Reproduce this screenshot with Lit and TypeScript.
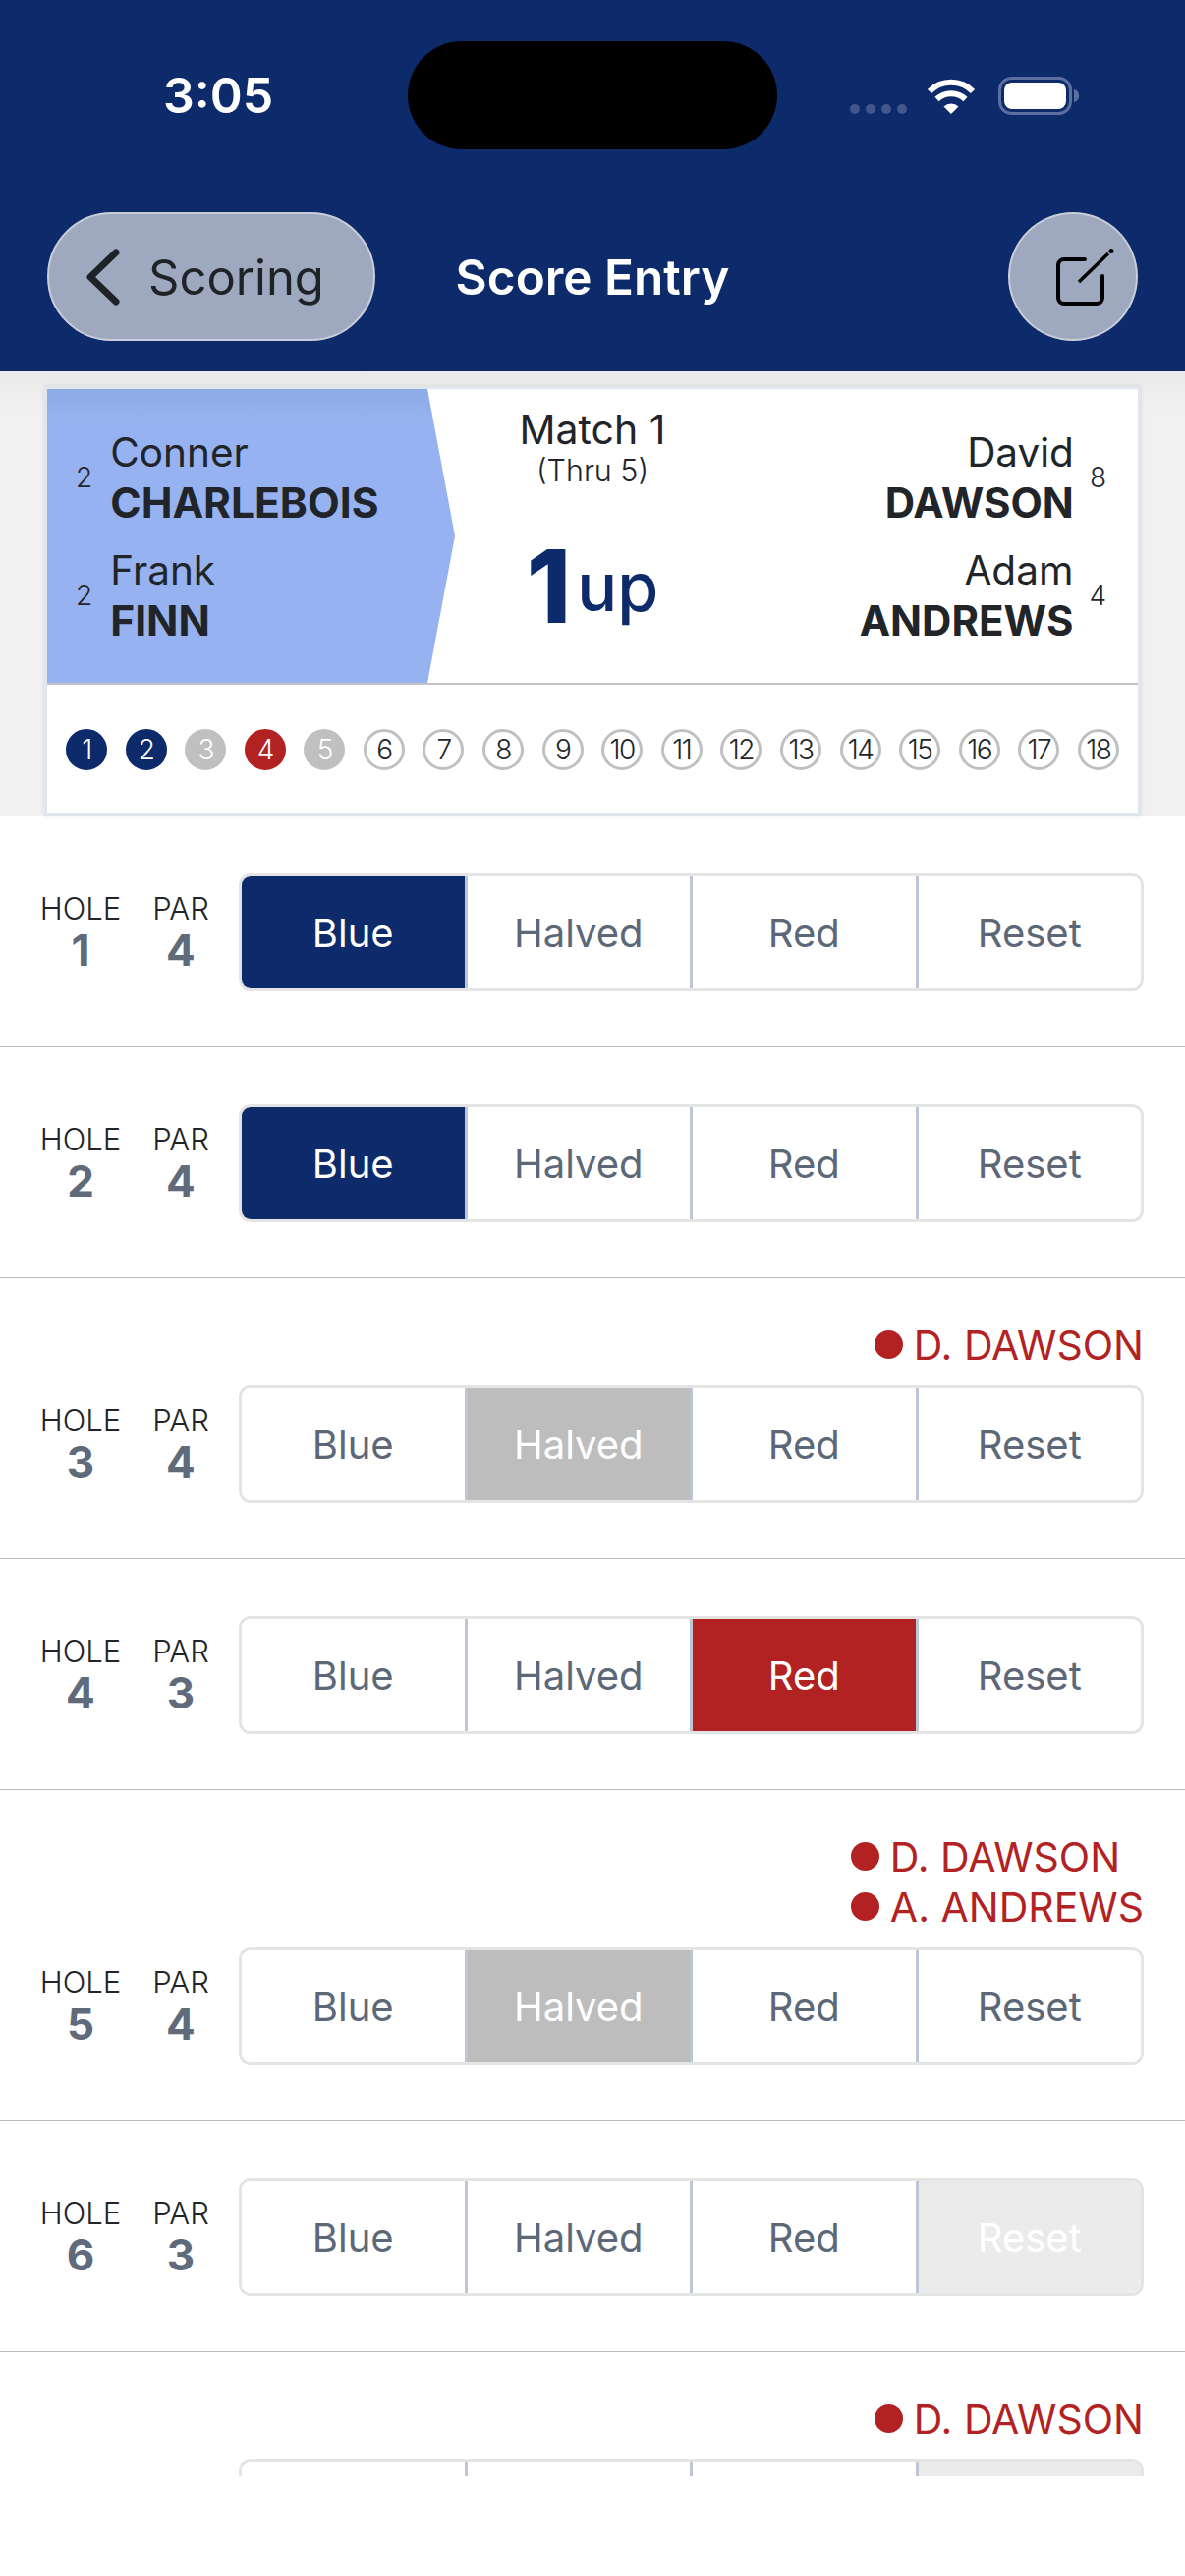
import { LitElement, css, html, nothing } from 'lit';
import { customElement } from 'lit/decorators.js';
import { classMap } from 'lit/directives/class-map.js';

interface Hole {
  hole: number;
  par: number;
  picked?: string;
  resetOff?: boolean;
  tags?: string[];
  // last row sits under the fold, only its top edge shows
  partial?: boolean;
}

const HOLES: Hole[] = [
  { hole: 1, par: 4, picked: 'Blue' },
  { hole: 2, par: 4, picked: 'Blue' },
  { hole: 3, par: 4, picked: 'Halved', tags: ['D. DAWSON'] },
  { hole: 4, par: 3, picked: 'Red' },
  { hole: 5, par: 4, picked: 'Halved', tags: ['D. DAWSON', 'A. ANDREWS'] },
  { hole: 6, par: 3, resetOff: true },
  { hole: 7, par: 4, resetOff: true, partial: true, tags: ['D. DAWSON'] },
];

const DOTS = ['blue', 'blue', 'grey', 'red', 'grey'];
const OPTIONS = ['Blue', 'Halved', 'Red', 'Reset'];

@customElement('app-root')
export class AppRoot extends LitElement {
  static styles = css`
    :host {
      display: block;
      height: 2622px;
      overflow: hidden;
      background: #fff;
      font-family: Inter, 'Liberation Sans', sans-serif;
      color: #212529;
    }

    .top {
      height: 378px;
      background: #0d2a6b;
      box-sizing: border-box;
      padding-top: 42px;
    }

    .status {
      display: grid;
      grid-template-columns: 415px 376px 1fr;
      height: 110px;
    }
    .time {
      padding-left: 166px;
      font-size: 50px;
      font-weight: 600;
      line-height: 110px;
      color: #fff;
    }
    .island {
      background: #000;
      border-radius: 55px;
    }
    .sys {
      position: relative;
      display: flex;
      padding-left: 74px;
    }
    .signal {
      display: flex;
      gap: 6px;
      margin-top: 64px;
    }
    .signal i {
      width: 10px;
      height: 10px;
      border-radius: 50%;
      background: #3f578d;
    }
    .wifi {
      margin: 37px 0 0 19px;
    }
    .battery {
      margin: 36px 0 0 22px;
    }

    .nav {
      display: grid;
      grid-template-columns: 1fr auto 1fr;
      align-items: center;
      padding: 64px 48px 0;
    }
    .back {
      justify-self: start;
      display: flex;
      align-items: center;
      box-sizing: border-box;
      width: 334px;
      height: 131px;
      padding-left: 35px;
      gap: 26px;
      border: 2px solid #c9ced9;
      border-radius: 66px;
      background: #9ea9c0;
      font-size: 49px;
      line-height: 1;
      color: #1f2226;
    }
    .back span {
      padding-top: 2px;
    }
    .title {
      font-size: 49.5px;
      font-weight: 600;
      color: #fff;
    }
    .edit {
      justify-self: end;
      display: flex;
      box-sizing: border-box;
      width: 132px;
      height: 131px;
      border: 2px solid #c9ced9;
      border-radius: 50%;
      background: #9ea9c0;
    }
    .edit svg {
      margin: 35px 0 0 45px;
    }

    .band {
      height: 453px;
      box-sizing: border-box;
      padding: 15px 45px 0;
      background: linear-gradient(#e9e9e9, #f1f1f1 40px);
    }
    .card {
      height: 438px;
      box-sizing: border-box;
      border: 3px solid #e0e6eb;
      background: #fff;
      box-shadow: 0 0 4px rgba(0, 0, 0, 0.1);
    }
    .match {
      display: grid;
      grid-template-columns: 415px 1fr 415px;
      height: 299px;
      border-bottom: 2px solid #c4c4c4;
    }
    .wedge {
      display: flex;
      flex-direction: column;
      justify-content: center;
      gap: 18px;
      padding-left: 29px;
      background: linear-gradient(#8fabe6, #96b2f0 36px);
      clip-path: polygon(0 0, 387px 0, 100% 50%, 387px 100%, 0 100%);
    }
    .side {
      display: flex;
      flex-direction: column;
      justify-content: center;
      align-items: flex-end;
      gap: 18px;
      padding-right: 32px;
    }
    .player {
      display: flex;
      align-items: center;
      gap: 18px;
    }
    .side .player {
      gap: 16px;
      text-align: right;
    }
    .hcp {
      font-size: 28px;
      font-weight: 300;
      color: #212529;
    }
    .name {
      font-size: 40.5px;
      line-height: 51px;
    }
    .name b {
      display: block;
      font-size: 42px;
      font-weight: 700;
    }
    .wedge .name b {
      font-size: 42.5px;
    }
    .centre {
      display: flex;
      flex-direction: column;
      align-items: center;
      padding-top: 16px;
    }
    .centre .label {
      font-size: 41px;
      line-height: 50px;
    }
    .centre .thru {
      font-size: 30.5px;
      font-weight: 300;
      line-height: 34px;
    }
    .score {
      display: flex;
      align-items: center;
      gap: 6px;
      margin-top: 46px;
      color: #0d2a6b;
      line-height: 110px;
    }
    .score b {
      font-size: 103px;
      font-weight: 800;
    }
    .score span {
      font-size: 68px;
      font-weight: 500;
    }
    .dots {
      display: flex;
      justify-content: space-between;
      padding: 45px 19px 0;
    }
    .dot {
      display: flex;
      align-items: center;
      justify-content: center;
      box-sizing: border-box;
      width: 42px;
      height: 42px;
      border: 3px solid #c0c0c0;
      border-radius: 50%;
      font-size: 28px;
      font-weight: 300;
      letter-spacing: -1.5px;
      color: #212529;
    }
    .dot.blue {
      background: #0d2a6b;
      border-color: #0d2a6b;
      color: #fff;
    }
    .dot.grey {
      background: #c0c0c0;
      color: #fff;
    }
    .dot.red {
      background: #b22222;
      border-color: #b22222;
      color: #fff;
    }

    .list {
      height: 1689px;
      overflow: hidden;
    }
    .row {
      display: flex;
      flex-direction: column;
      padding: 58px 42px 56px;
      border-bottom: 1px solid #b9b9b9;
    }
    .tags {
      align-self: flex-end;
      display: flex;
      flex-direction: column;
      margin-top: -16px;
      margin-bottom: 16px;
    }
    .tag {
      display: flex;
      align-items: center;
      gap: 11px;
      height: 51px;
      font-size: 41px;
      color: #b22222;
    }
    .tag i {
      width: 29px;
      height: 29px;
      border-radius: 50%;
      background: #b22222;
    }
    .line {
      display: flex;
      align-items: center;
    }
    .stat {
      display: flex;
      flex-direction: column;
      align-items: center;
      font-size: 31px;
      line-height: 32px;
      font-weight: 300;
      color: #212529;
    }
    .stat b {
      margin-top: 3px;
      font-size: 44px;
      line-height: 46px;
      font-weight: 700;
      color: #5f6b7a;
    }
    .stat.holeno {
      width: 80px;
    }
    .stat.par {
      width: 60px;
      margin-left: 32px;
    }
    .seg {
      display: flex;
      box-sizing: border-box;
      width: 921px;
      height: 120px;
      margin-left: 29px;
      border: 3px solid #e4e4e4;
      border-radius: 12px;
      overflow: hidden;
    }
    .seg button {
      flex: 1;
      padding: 0;
      border: 0;
      border-right: 3px solid #bcc6d4;
      background: #fff;
      font: 400 40px Inter, 'Liberation Sans', sans-serif;
      color: #5c6878;
    }
    .seg button:last-child {
      border-right: 0;
    }
    .seg button.Blue {
      background: #0d2a6b;
      color: #fff;
    }
    .seg button.Halved {
      background: #bdbdbd;
      color: #fff;
    }
    .seg button.Red {
      background: #b22222;
      color: #fff;
    }
    .seg button.off {
      background: #ebebeb;
      color: #fff;
    }
  `;

  private renderPlayer(first: string, last: string, hcp: number, right = false) {
    const name = html`<div class="name">${first}<b>${last}</b></div>`;
    const num = html`<span class="hcp">${hcp}</span>`;
    return html`<div class="player">${right ? html`${name}${num}` : html`${num}${name}`}</div>`;
  }

  private renderStat(label: string, value: number, cls: string, show: boolean) {
    return html`<div class="stat ${cls}">${show ? html`${label}<b>${value}</b>` : nothing}</div>`;
  }

  private renderRow(h: Hole) {
    return html`
      <div class="row">
        ${h.tags
          ? html`<div class="tags">
              ${h.tags.map((t) => html`<div class="tag"><i></i>${t}</div>`)}
            </div>`
          : nothing}
        <div class="line">
          ${this.renderStat('HOLE', h.hole, 'holeno', !h.partial)}
          ${this.renderStat('PAR', h.par, 'par', !h.partial)}
          <div class="seg">
            ${OPTIONS.map(
              (o) => html`<button
                class=${classMap({
                  [o]: h.picked === o,
                  off: o === 'Reset' && !!h.resetOff,
                })}
              >
                ${h.partial ? nothing : o}
              </button>`,
            )}
          </div>
        </div>
      </div>
    `;
  }

  render() {
    return html`
      <div class="top">
        <div class="status">
          <div class="time">3:05</div>
          <div class="island"></div>
          <div class="sys">
            <div class="signal"><i></i><i></i><i></i><i></i></div>
            <svg class="wifi" width="52" height="38" viewBox="0 0 52 38" fill="none">
              <path d="M4 14A31 31 0 0 1 48 14" stroke="#fff" stroke-width="6" />
              <path d="M11.5 22A21 21 0 0 1 40.5 22" stroke="#fff" stroke-width="6" />
              <path d="M18.5 29.5A11 11 0 0 1 33.500 29.500L26 37Z" fill="#fff" />
            </svg>
            <svg class="battery" width="84" height="40" viewBox="0 0 84 40" fill="none">
              <rect x="1.500" y="1.500" width="72" height="36" rx="12" stroke="#5c6f9e" stroke-width="3" />
              <rect x="6" y="6" width="63" height="27" rx="8" fill="#fff" />
              <path d="M77 13C81 14 82 17 82 19.500C82 22 81 25 77 26Z" fill="#5c6f9e" />
            </svg>
          </div>
        </div>
        <div class="nav">
          <div class="back">
            <svg width="40" height="62" viewBox="0 0 40 62" fill="none">
              <path d="M33 6L7 31L33 56" stroke="#1f2226" stroke-width="7" stroke-linecap="round" stroke-linejoin="round" />
            </svg>
            <span>Scoring</span>
          </div>
          <div class="title">Score Entry</div>
          <div class="edit">
            <svg width="64" height="64" viewBox="0 0 64 64" fill="none">
              <path d="M31 11H10A6 6 0 0 0 4 17V50A6 6 0 0 0 10 56H43A6 6 0 0 0 49 50V28" stroke="#000" stroke-width="4" stroke-linecap="round" />
              <path d="M25 34L55 5" stroke="#000" stroke-width="3.500" />
              <circle cx="58" cy="2.500" r="2.500" fill="#000" />
            </svg>
          </div>
        </div>
      </div>
      <div class="band">
        <div class="card">
          <div class="match">
            <div class="wedge">
              ${this.renderPlayer('Conner', 'CHARLEBOIS', 2)}
              ${this.renderPlayer('Frank', 'FINN', 2)}
            </div>
            <div class="centre">
              <div class="label">Match 1</div>
              <div class="thru">(Thru 5)</div>
              <div class="score"><b>1</b><span>up</span></div>
            </div>
            <div class="side">
              ${this.renderPlayer('David', 'DAWSON', 8, true)}
              ${this.renderPlayer('Adam', 'ANDREWS', 4, true)}
            </div>
          </div>
          <div class="dots">
            ${Array.from({ length: 18 }, (_, i) => html`<div class="dot ${DOTS[i] ?? ''}">${i + 1}</div>`)}
          </div>
        </div>
      </div>
      <div class="list">${HOLES.map((h) => this.renderRow(h))}</div>
    `;
  }
}
